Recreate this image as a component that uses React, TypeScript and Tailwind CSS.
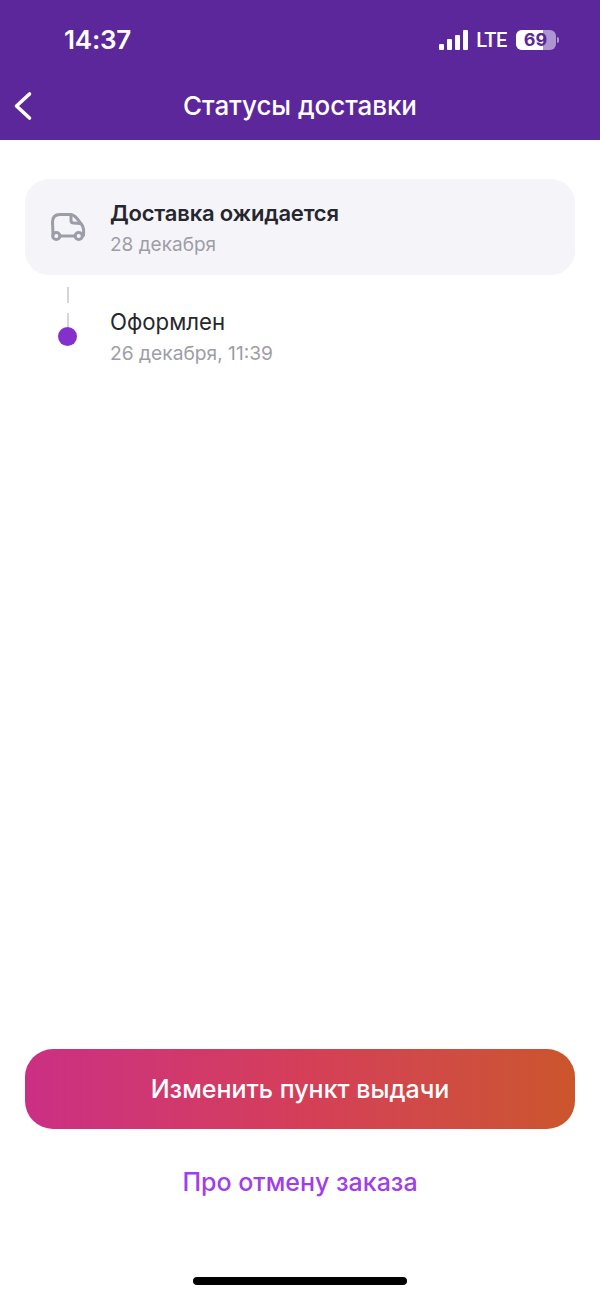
const font = "font-['Inter',sans-serif]";

const Battery = () => (
  <div className="flex items-center">
    <div className="relative flex h-[20px] w-[40px] items-center justify-center overflow-hidden rounded-[6px] bg-[#ae95cf]">
      <div className="absolute inset-y-0 left-0 w-[27px] bg-white" />
      <span className="relative -ml-[1px] text-[18px] font-bold leading-none text-[#5c279b]">69</span>
    </div>
    <div className="ml-[1px] h-[6px] w-[2px] rounded-r-sm bg-[#ae95cf]" />
  </div>
);

const Signal = () => (
  <div className="flex items-end gap-[2.5px]">
    <div className="h-[6px] w-[5.5px] rounded-[1px] bg-white" />
    <div className="h-[11px] w-[5.5px] rounded-[1px] bg-white" />
    <div className="h-[15px] w-[5.5px] rounded-[1px] bg-white" />
    <div className="h-[20px] w-[5.5px] rounded-[1px] bg-white" />
  </div>
);

const Car = () => (
  <svg width="36" height="30" viewBox="0 0 36 30" fill="none" stroke="#9d9da8" strokeWidth="3" strokeLinecap="round" strokeLinejoin="round">
    <path d="M3 23 L2.5 10 C2.5 5 5 2.5 10 2.5 L20 2.5 C23 2.5 25 4 27 6.5 L32 13 C33.5 15 34 17 33.5 23.5 L32.5 24" />
    <path d="M21 3 L21 8.5 C21 10 22 11 23.5 11 L30 11.5" />
    <path d="M10 24 L25 24" />
    <circle cx="6.3" cy="24" r="3.6" />
    <circle cx="28.7" cy="24" r="3.6" />
  </svg>
);

export default function App() {
  return (
    <div className={`flex h-[1297px] w-[600px] flex-col bg-white ${font}`}>
      {/* Status bar + header */}
      <header className="flex h-[140px] flex-col bg-[#5c279b] text-white">
        <div className="flex h-[80px] items-center justify-between pl-[64px] pr-[41px]">
          <span className="text-[26px] font-semibold leading-none tracking-[-0.2px]">14:37</span>
          <div className="flex items-center">
            <Signal />
            <span className="ml-[8px] mr-[9px] font-['Roboto',sans-serif] text-[20px] font-medium leading-none tracking-[-0.4px]">LTE</span>
            <Battery />
          </div>
        </div>
        <div className="relative flex h-[52px] items-center justify-center">
          <svg className="absolute left-[12px] top-[8px]" width="22" height="36" viewBox="0 0 22 36" fill="none" stroke="white" strokeWidth="3.6" strokeLinecap="round" strokeLinejoin="round">
            <path d="M17.5 6 L4.5 18 L17.5 30" />
          </svg>
          <h1 className="text-[26px] font-medium leading-none tracking-[-0.05px]">Статусы доставки</h1>
        </div>
      </header>

      <main className="flex flex-1 flex-col px-[25px] pt-[39px]">
        <div className="flex h-[96px] items-center rounded-[24px] bg-[#f5f5f9]">
          <div className="flex w-[86px] shrink-0 justify-center">
            <Car />
          </div>
          <div className="-ml-[1px] pt-[2px]">
            <div className="text-[22px] font-semibold leading-[28px] tracking-[-0.2px] text-[#26262e]">Доставка ожидается</div>
            <div className="mt-[6px] text-[19px] leading-[24px] text-[#9d9da8]">28 декабря</div>
          </div>
        </div>

        <div className="flex">
          <div className="flex w-[85px] flex-col items-center">
            <div className="mt-[12px] h-[16px] w-[2px] bg-[#d5d5dc]" />
            <div className="mt-[10px] h-[14px] w-[2px] bg-[#d5d5dc]" />
            <div className="h-[19px] w-[19px] rounded-full bg-[#8431cb]" />
          </div>
          <div className="pt-[33px]">
            <div className="text-[22.2px] leading-[28px] text-[#26262e]">Оформлен</div>
            <div className="mt-[5px] text-[19.2px] leading-[24px] text-[#9d9da8]">26 декабря, 11:39</div>
          </div>
        </div>

        <div className="mt-auto">
          <button className="flex h-[80px] w-full items-center justify-center rounded-[28px] bg-gradient-to-r from-[#cb2f84] via-[#d53e58] to-[#cb552b] pt-[2px] text-[25px] font-medium text-white">
            Изменить пункт выдачи
          </button>
          <div className="mt-[38px] text-center text-[25px] font-medium leading-[30px] text-[#a03ee8]">Про отмену заказа</div>
        </div>
      </main>

      {/* Home indicator */}
      <div className="flex h-[100px] shrink-0 items-start justify-center pt-[80px]">
        <div className="h-[8px] w-[214px] rounded-full bg-black" />
      </div>
    </div>
  );
}
